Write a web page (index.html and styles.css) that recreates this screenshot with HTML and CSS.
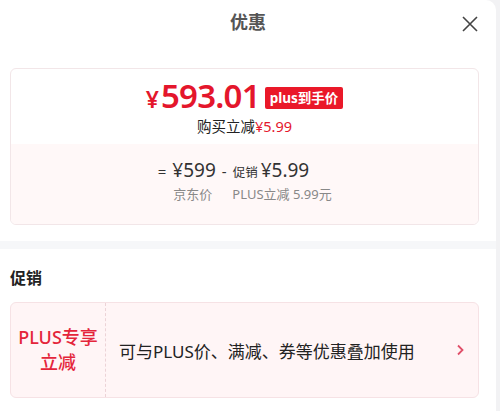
FILE: index.html
```html
<!DOCTYPE html>
<html>
<head>
  <title>优惠</title>
  <link rel="stylesheet" href="styles.css">
</head>
<body>
  <div class="panel">
    <div class="header">
      <h1>优惠</h1>
      <span class="close">
        <svg width="16" height="16" viewBox="0 0 16 16"><path d="M1 1 L15 15 M15 1 L1 15" stroke="#444" stroke-width="1.6" fill="none"/></svg>
      </span>
    </div>

    <div class="price-card">
      <div class="price-top">
        <div class="price-line">
          <span class="price"><span class="yen">¥</span>593.01</span>
          <span class="badge">plus到手价</span>
        </div>
        <div class="save">购买立减<span class="red">¥5.99</span></div>
      </div>
      <div class="price-bottom">
        <div class="formula">
          <span class="eq">=</span>
          <span class="num">¥599</span>
          <span class="minus">-</span>
          <span class="small">促销</span>
          <span class="num">¥5.99</span>
        </div>
        <div class="labels">
          <span>京东价</span>
          <span>PLUS立减 5.99元</span>
        </div>
      </div>
    </div>

    <div class="divider"></div>

    <h2>促销</h2>
    <div class="promo">
      <div class="promo-tag">PLUS专享<br>立减</div>
      <div class="promo-text">可与PLUS价、满减、券等优惠叠加使用</div>
      <span class="arrow">
        <svg width="8" height="12" viewBox="0 0 8 12"><path d="M2 1.5 L6.5 6 L2 10.5" stroke="#e0506a" stroke-width="1.8" fill="none"/></svg>
      </span>
    </div>
  </div>
</body>
</html>
```

FILE: styles.css
```css
body {
  margin: 0;
  padding: 0;
  background: #f2f2f4;
  font-family: "Noto Sans", "Noto Sans CJK SC", sans-serif;
  color: #222;
}
.panel {
  width: 496px;
  height: 411px;
  background: #fff;
  border-top-right-radius: 10px;
  overflow: hidden;
}
.header {
  position: relative;
  height: 44px;
  display: flex;
  align-items: center;
  justify-content: center;
}
.header h1 {
  margin: 0 0 2px 0;
  font-size: 18px;
  font-weight: bold;
  color: #555;
}
.close {
  position: absolute;
  right: 18px;
  top: 16px;
  display: flex;
}
.price-card {
  margin: 24px 17px 0 10px;
  border: 1px solid #f2e6e8;
  border-radius: 6px;
  overflow: hidden;
}
.price-top {
  height: 75px;
  display: flex;
  flex-direction: column;
  align-items: center;
  padding-top: 9px;
  box-sizing: border-box;
}
.price-line {
  display: flex;
  align-items: center;
  gap: 5px;
  height: 38px;
}
.price {
  color: #e4162c;
  font-size: 33px;
  line-height: 38px;
  font-weight: 600;
  letter-spacing: -0.8px;
}
.yen {
  font-size: 23px;
  margin-right: 3px;
}
.badge {
  background: #ea1829;
  color: #fff;
  font-size: 13.5px;
  line-height: 20px;
  font-weight: bold;
  padding: 1px 5px;
  border-radius: 2px;
  margin-top: 2px;
}
.save {
  font-size: 14.5px;
  line-height: 20px;
  color: #222;
}
.red {
  color: #e4162c;
}
.price-bottom {
  background: #fff8f8;
  height: 80px;
  display: flex;
  flex-direction: column;
  align-items: center;
  padding-top: 13px;
  box-sizing: border-box;
}
.formula {
  display: flex;
  align-items: baseline;
  gap: 6px;
  color: #333;
  margin-right: 22px;
}
.formula .eq {
  font-size: 15px;
}
.formula .num {
  font-size: 19px;
}
.formula .minus {
  font-size: 15px;
}
.formula .small {
  font-size: 12.5px;
  margin-right: -3px;
}
.labels {
  display: flex;
  gap: 20px;
  font-size: 13px;
  color: #888;
  margin-top: 1px;
  margin-left: 16px;
}
.divider {
  height: 8px;
  background: #f6f7f9;
  margin-top: 16px;
}
h2 {
  margin: 16px 0 0 10px;
  font-size: 16px;
  font-weight: bold;
  color: #222;
}
.promo {
  margin: 13px 17px 0 10px;
  height: 96px;
  background: #fff5f6;
  border: 1px solid #f6e2e5;
  border-radius: 6px;
  display: flex;
  align-items: center;
  box-sizing: border-box;
}
.promo-tag {
  width: 94px;
  height: 100%;
  border-right: 1px dashed #ecd3d7;
  display: flex;
  align-items: center;
  justify-content: center;
  text-align: center;
  color: #e4253b;
  font-size: 18px;
  line-height: 25px;
  font-weight: 500;
}
.promo-text {
  flex: 1;
  padding-left: 13px;
  font-size: 17px;
  color: #222;
}
.arrow {
  display: flex;
  margin-right: 14px;
}
```
